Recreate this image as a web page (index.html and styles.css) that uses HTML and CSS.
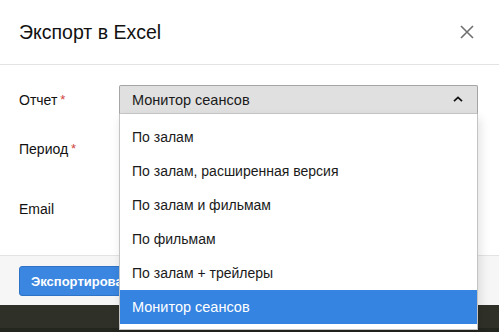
FILE: index.html
```html
<!DOCTYPE html>
<html lang="ru">
<head>
<meta charset="utf-8">
<link rel="stylesheet" href="styles.css">
</head>
<body>
<div class="modal">
  <div class="modal-header">
    <h1 class="modal-title">Экспорт в Excel</h1>
    <svg class="close" width="14" height="14" viewBox="0 0 14 14"><path d="M1 1 L13 13 M13 1 L1 13" stroke="#707070" stroke-width="1.6" fill="none"/></svg>
  </div>
  <div class="modal-body">
    <div class="form-row row-report">
      <div class="label">Отчет<span class="req">*</span></div>
      <div class="control">
        <div class="select">
          <span>Монитор сеансов</span>
          <svg class="chev" width="10" height="6" viewBox="0 0 10 6"><path d="M1 5.2 L5 1.4 L9 5.2" stroke="#111" stroke-width="1.7" fill="none"/></svg>
        </div>
        <ul class="dropdown">
          <li>По залам</li>
          <li>По залам, расширенная версия</li>
          <li>По залам и фильмам</li>
          <li>По фильмам</li>
          <li>По залам + трейлеры</li>
          <li class="active">Монитор сеансов</li>
        </ul>
      </div>
    </div>
    <div class="form-row row-period">
      <div class="label">Период<span class="req">*</span></div>
      <div class="control"><div class="input"></div></div>
    </div>
    <div class="form-row row-email">
      <div class="label">Email</div>
      <div class="control"><div class="input"></div></div>
    </div>
  </div>
  <div class="modal-footer">
    <button class="btn">Экспортировать</button>
  </div>
</div>
<div class="backdrop"></div>
</body>
</html>
```
FILE: styles.css
```css
html, body {
  margin: 0;
  padding: 0;
  width: 499px;
  height: 332px;
  overflow: hidden;
  font-family: "Liberation Sans", Arial, sans-serif;
  color: #222;
  background: #2f3129;
}
.modal {
  background: #fff;
  height: 305px;
  display: flex;
  flex-direction: column;
}
.modal-header {
  border-bottom: 1px solid #e3e3e3;
  display: flex;
  align-items: center;
  justify-content: space-between;
  padding: 0 25px 0 19px;
  box-sizing: border-box;
  height: 65px;
}
.modal-title {
  margin: 0;
  font-size: 19.5px;
  font-weight: normal;
  color: #111;
  padding-top: 1px;
}
.close {
  display: block;
}
.modal-body {
  padding: 20px 21px 0 19px;
  height: 190px;
  box-sizing: border-box;
}
.form-row {
  display: flex;
  align-items: center;
}
.label {
  width: 100px;
  font-size: 14px;
  color: #111;
}
.req {
  color: #d0443a;
  margin-left: 3px;
  font-size: 13px;
  position: relative;
  top: -1px;
}
.control {
  flex: 1;
  position: relative;
}
.row-report { height: 29px; }
.row-period { height: 30px; margin-top: 20px; }
.row-email { height: 30px; margin-top: 30px; }
.select {
  height: 29px;
  box-sizing: border-box;
  background: #e0e0e0;
  border: 1px solid #a5a5a5;
  border-bottom-color: #c8c8c8;
  border-radius: 2px 2px 0 0;
  display: flex;
  align-items: center;
  justify-content: space-between;
  padding: 0 14px 0 12px;
  font-size: 14.5px;
  color: #1a1a1a;
}
.chev { display: block; margin-top: -1px; }
.input {
  height: 30px;
  box-sizing: border-box;
  border: 1px solid #ccc;
  border-radius: 3px;
}
.dropdown {
  position: absolute;
  top: 29px;
  left: 0;
  right: 0;
  margin: 0;
  padding: 6px 0 5px;
  list-style: none;
  background: #fff;
  border: 1px solid #c4c4c4;
  border-top: none;
  box-shadow: 2px 4px 10px rgba(0,0,0,0.12);
  z-index: 5;
}
.dropdown li {
  height: 34px;
  line-height: 34px;
  padding-left: 12px;
  font-size: 14px;
  color: #1a1a1a;
}
.dropdown li.active {
  background: #3584e2;
  color: #fff;
  font-size: 14.5px;
}
.modal-footer {
  flex: 1;
  border-top: 1px solid #e3e3e3;
  background: #f6f6f6;
  padding: 10px 19px 0;
}
.btn {
  height: 30px;
  width: 132px;
  background: #3a86e0;
  border: 1px solid #2f73c6;
  border-radius: 3px;
  color: #fff;
  font-family: "Liberation Sans", Arial, sans-serif;
  font-weight: bold;
  font-size: 13px;
  padding: 0 11px;
  text-align: left;
}
.backdrop {
  height: 27px;
  background: #2f3129;
  border-bottom: 4px solid #23251f;
  box-sizing: border-box;
}
```
